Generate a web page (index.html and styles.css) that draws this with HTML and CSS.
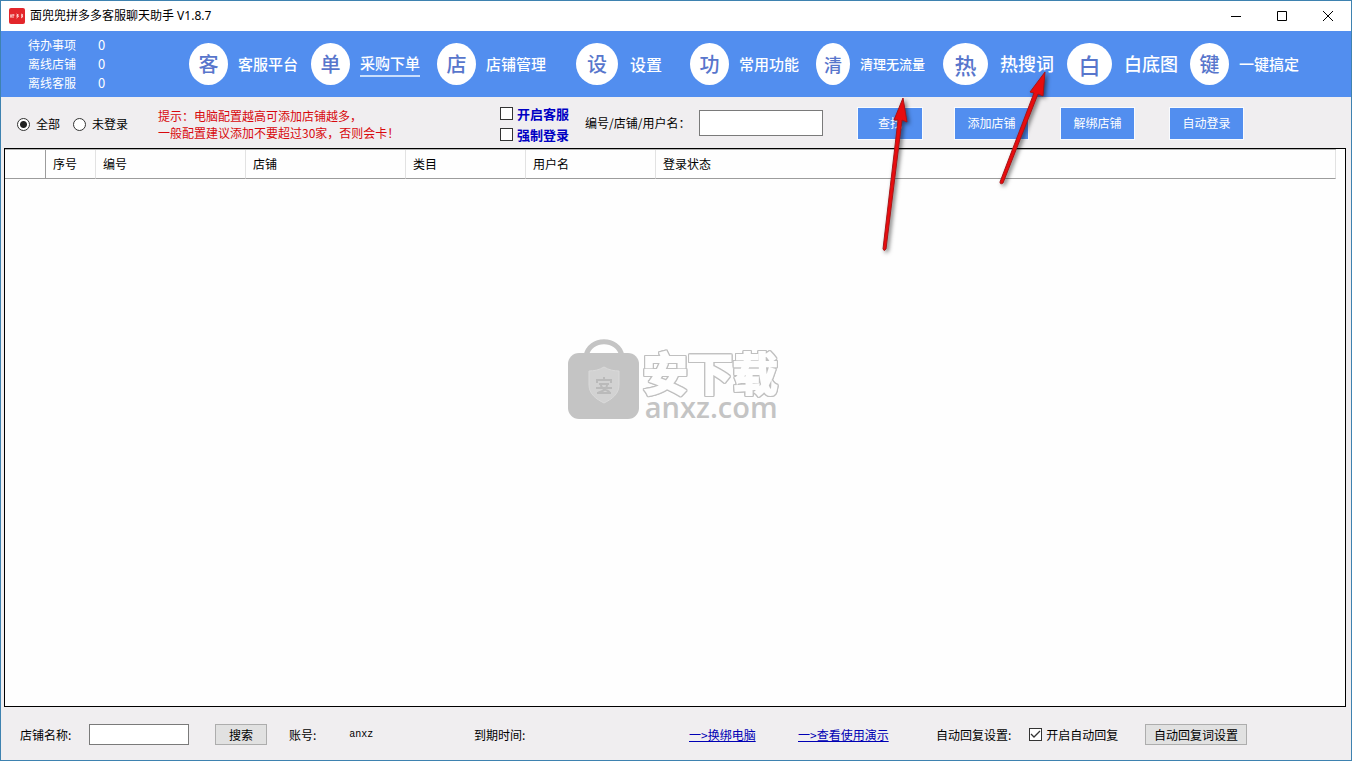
FILE: index.html
```html
<!DOCTYPE html>
<html lang="zh-CN">
<head>
<meta charset="utf-8">
<title>面兜兜拼多多客服聊天助手 V1.8.7</title>
<link rel="stylesheet" href="styles.css">
</head>
<body>
<div class="window">
  <header class="titlebar">
    <svg class="app-icon" viewBox="0 0 16 16" aria-hidden="true">
      <rect width="16" height="16" rx="2" fill="#e3262b"/>
      <path d="M2 6v4M1 8h2M4 6v4M3.500 7h2M7.500 6l2 1-2 1 2 .5-2 1.500M12 6l2 1-2 1 2 .5-2 1.500" fill="none" stroke="#ffe1dc" stroke-width="0.900"/>
    </svg>
    <h1 class="title">面兜兜拼多多客服聊天助手 V1.8.7</h1>
    <div class="window-controls">
      <button type="button" class="window-button" aria-label="最小化"><svg viewBox="0 0 12 12"><path d="M1 6.500h10" /></svg></button>
      <button type="button" class="window-button" aria-label="最大化"><svg viewBox="0 0 12 12"><path d="M1.500 1.500h9v9h-9z"/></svg></button>
      <button type="button" class="window-button" aria-label="关闭"><svg viewBox="0 0 12 12"><path d="M1 1l10 10M11 1L1 11"/></svg></button>
    </div>
  </header>

  <div class="banner">
    <dl class="stats">
      <dt>待办事项</dt><dd>0</dd>
      <dt>离线店铺</dt><dd>0</dd>
      <dt>离线客服</dt><dd>0</dd>
    </dl>
    <nav class="nav">
      <button type="button" class="nav-item"><span class="disc">客</span><span class="nav-label">客服平台</span></button>
      <button type="button" class="nav-item"><span class="disc">单</span><span class="nav-label current">采购下单</span></button>
      <button type="button" class="nav-item"><span class="disc">店</span><span class="nav-label">店铺管理</span></button>
      <button type="button" class="nav-item roomy"><span class="disc round">设</span><span class="nav-label medium">设置</span></button>
      <button type="button" class="nav-item"><span class="disc">功</span><span class="nav-label">常用功能</span></button>
      <button type="button" class="nav-item"><span class="disc narrow">清</span><span class="nav-label small">清理无流量</span></button>
      <button type="button" class="nav-item roomy"><span class="disc wide">热</span><span class="nav-label large">热搜词</span></button>
      <button type="button" class="nav-item roomy"><span class="disc wide">白</span><span class="nav-label large">白底图</span></button>
      <button type="button" class="nav-item"><span class="disc">键</span><span class="nav-label">一键搞定</span></button>
    </nav>
  </div>

  <form class="toolbar">
    <div class="radios">
      <label class="option"><input type="radio" name="scope" class="radio" checked>全部</label>
      <label class="option"><input type="radio" name="scope" class="radio">未登录</label>
    </div>
    <p class="hint">提示：电脑配置越高可添加店铺越多，<br>一般配置建议添加不要超过30家，否则会卡！</p>
    <div class="switches">
      <label class="option strong"><input type="checkbox" class="check">开启客服</label>
      <label class="option strong"><input type="checkbox" class="check">强制登录</label>
    </div>
    <div class="search">
      <label for="query">编号/店铺/用户名：</label>
      <input type="text" id="query" class="field query">
    </div>
    <button type="button" class="action short">查找</button>
    <button type="button" class="action">添加店铺</button>
    <button type="button" class="action">解绑店铺</button>
    <button type="button" class="action">自动登录</button>
  </form>

  <main class="list">
    <table class="shops">
      <colgroup><col class="c-mark"><col class="c-index"><col class="c-code"><col class="c-shop"><col class="c-type"><col class="c-user"><col></colgroup>
      <thead>
        <tr><th></th><th>序号</th><th>编号</th><th>店铺</th><th>类目</th><th>用户名</th><th>登录状态</th></tr>
      </thead>
    </table>
    <div class="watermark">
      <svg class="bag" viewBox="0 0 72 80" aria-hidden="true">
        <path d="M18 17C22 -2 50 -2 54 17" fill="none" stroke="#c4c4c4" stroke-width="5"/>
        <rect x="0" y="14" width="71" height="66" rx="11" fill="#c4c4c4"/>
        <path d="M36 28c5 3 10 4 15 4v14c0 9-7 14-15 18c-8-4-15-9-15-18V32c5 0 10-1 15-4z" fill="#d2d2d2" stroke="#dadada"/>
        <path d="M36 38v3M29 44v-3h14v3M31 45h10M28 49h16M33 46c0 5 7 4 9 8M39 46c0 5-5 6-9 8M29 54h14" fill="none" stroke="#bababa" stroke-width="2"/>
      </svg>
      <div class="mark-text"><span class="mark-name">安下载</span><span class="mark-site">anxz.com</span></div>
    </div>
  </main>

  <footer class="footer">
    <div class="group name-group"><label for="shop">店铺名称:</label><input type="text" id="shop" class="field shop"></div>
    <button type="button" class="plain">搜索</button>
    <div class="group account"><span>账号:</span><span class="account-name">anxz</span></div>
    <span>到期时间:</span>
    <a href="#">一&gt;换绑电脑</a>
    <a href="#">一&gt;查看使用演示</a>
    <div class="group reply"><span>自动回复设置:</span><label class="option tight"><input type="checkbox" class="check" checked>开启自动回复</label></div>
    <button type="button" class="plain">自动回复词设置</button>
  </footer>

  <svg class="arrows" viewBox="0 0 180 200" aria-hidden="true">
    <g fill="#e80c0e" stroke="#a81416" stroke-width="1" stroke-linejoin="round">
      <path d="M32 14L36 38L31 36L15 165Q13 168 12 165L27 36L23 36z"/>
      <path d="M174 -12L172 12L167 10L132 99Q129 101 129 98L163 9L159 8z"/>
    </g>
  </svg>
</div>
</body>
</html>
```
FILE: styles.css
```css
* { box-sizing: border-box; }

body {
  margin: 0;
  background: #f0eef0;
  color: #000;
  font: 12px/16px "Noto Sans CJK SC", sans-serif;
}

button, input { font: inherit; color: inherit; margin: 0; }
button { padding: 0; border: 0; background: none; white-space: nowrap; }

.window {
  position: relative;
  display: flex;
  flex-direction: column;
  min-height: 100vh;
  border: 1px solid #3e82b0;
}

.titlebar {
  display: flex;
  align-items: center;
  height: 30px;
  padding-left: 8px;
  background: #fff;
}
.app-icon { width: 16px; height: 16px; }
.title { margin: 0 0 0 5px; font: 400 12px/16px "Noto Sans", "Noto Sans CJK SC", sans-serif; }
.window-controls { display: flex; margin-left: auto; }
.window-button { width: 46px; height: 30px; display: grid; place-items: center; }
.window-button svg { width: 12px; height: 12px; fill: none; stroke: #000; }

.banner {
  display: grid;
  grid-template-columns: 188fr 1162fr;
  align-items: center;
  height: 66px;
  background: #528eef;
  color: #fff;
}
.stats {
  display: grid;
  grid-template-columns: 70px auto;
  justify-content: start;
  margin: 0;
  padding: 0 0 2px 27px;
  line-height: 19px;
}
.stats dd { margin: 0; font-size: 13px; }
.nav {
  display: grid;
  grid-template-columns: 122fr 126fr 139fr 114fr 126fr 127fr 124fr 123fr 161fr;
}
.nav-item { display: flex; align-items: center; gap: 10px; }
.nav-item.roomy { gap: 12px; }
.disc {
  display: grid;
  place-items: center;
  width: 39px;
  height: 42px;
  border-radius: 50%;
  background: #fff;
  color: #5876cc;
  font-size: 20px;
  line-height: 24px;
  font-weight: 500;
}
.disc.narrow { width: 34px; font-size: 18px; }
.disc.round { width: 42px; }
.disc.wide { width: 45px; font-size: 22px; }
.nav-label { font-size: 15px; line-height: 24px; font-weight: 500; }
.nav-label.current { border-bottom: 2px solid #c9defc; }
.nav-label.small { font-size: 13px; }
.nav-label.medium { font-size: 16px; }
.nav-label.large { padding-bottom: 2px; font-size: 18px; }

.toolbar {
  display: grid;
  grid-template-columns: 141fr 342fr 85fr 272fr 97fr 106fr 109fr 182fr;
  align-items: center;
  justify-items: start;
  height: 51px;
  padding-left: 16px;
}
.radios { display: flex; gap: 13px; padding-top: 3px; }
.option { display: flex; align-items: center; gap: 6px; white-space: nowrap; }
.option.strong { gap: 4px; color: #0000c4; font-size: 13px; line-height: 21px; font-weight: 700; }
.option.tight { gap: 4px; }
.radio, .check {
  appearance: none;
  flex: none;
  width: 13px;
  height: 13px;
  border: 1px solid #333;
  background: #fff;
}
.radio { border-radius: 50%; }
.radio:checked { background: radial-gradient(circle, #222 0 3px, #fff 4px); }
.check:checked {
  background: #fff url("data:image/svg+xml,%3Csvg xmlns='http://www.w3.org/2000/svg' viewBox='0 0 11 11'%3E%3Cpath d='M1 5l3 3 6-6' fill='none' stroke='%23333' stroke-width='1.3'/%3E%3C/svg%3E");
}
.hint { margin: 0; padding-top: 2px; color: #d8090d; line-height: 17px; white-space: nowrap; }
.switches { padding-top: 2px; }
.search { display: flex; align-items: center; gap: 4px; white-space: nowrap; }
.search label { width: 110px; }
.field { height: 21px; padding: 0 3px; border: 1px solid #7a7a7a; background: #fff; }
.query { width: 124px; height: 26px; }
.action {
  width: 75px;
  height: 33px;
  margin-top: 2px;
  padding-bottom: 2px;
  border: 1px solid #f8fbff;
  background: #528eef;
  color: #fff;
}
.action.short { width: 66px; }

.list {
  position: relative;
  flex: 1;
  margin: 0 5px 0 3px;
  padding: 0 9px 0 0;
  border: 1px solid #000;
  background: #fefefe;
}
.shops { width: 100%; table-layout: fixed; border-collapse: separate; border-spacing: 0; border-top: 1px solid #b4b4b4; }
.shops th {
  height: 29px;
  padding: 0 0 0 7px;
  border-right: 1px solid #e2e2e2;
  border-bottom: 1px solid #9c9c9c;
  font-weight: 400;
  text-align: left;
}
.shops th:first-child { border-right-color: #9c9c9c; }
.c-mark { width: 41px; }
.c-index { width: 50px; }
.c-code { width: 150px; }
.c-shop { width: 160px; }
.c-type { width: 120px; }
.c-user { width: 130px; }

.watermark {
  position: absolute;
  top: 190px;
  left: 42%;
  display: flex;
  gap: 3px;
  align-items: flex-end;
  color: #c4c4c4;
}
.bag { width: 72px; height: 80px; }
.mark-text { display: flex; flex-direction: column; }
.mark-name {
  color: #fefefe;
  font-size: 45px;
  line-height: 44px;
  font-weight: 700;
  -webkit-text-stroke: 2px #fefefe;
  filter: drop-shadow(1px 0 0 #c0c0c0) drop-shadow(-1px 0 0 #c0c0c0) drop-shadow(0 1px 0 #c0c0c0) drop-shadow(0 -1px 0 #c0c0c0);
}
.mark-site { padding-left: 2px; font: 600 29px/25px "Open Sans", sans-serif; }

.footer {
  display: grid;
  grid-template-columns: 195fr 74fr 185fr 215fr 109fr 138fr 209fr 206fr;
  align-items: center;
  justify-items: start;
  height: 53px;
  padding: 2px 0 0 19px;
  white-space: nowrap;
}
.footer a { color: #0000b4; }
.group { display: flex; align-items: center; }
.name-group label { width: 69px; }
.shop { width: 100px; }
.account { gap: 33px; }
.account-name { font: 10px/16px "Liberation Mono", monospace; }
.reply { gap: 18px; }
.plain {
  height: 21px;
  padding: 0 8px;
  border: 1px solid #adadad;
  background: #e1e1e1;
}
.footer .plain:nth-child(2) { padding: 0 13px; }

.arrows {
  position: absolute;
  top: 83px;
  left: 870px;
  width: 180px;
  height: 200px;
  overflow: visible;
  pointer-events: none;
  filter: drop-shadow(2px 2px 2px #0008);
}
```
